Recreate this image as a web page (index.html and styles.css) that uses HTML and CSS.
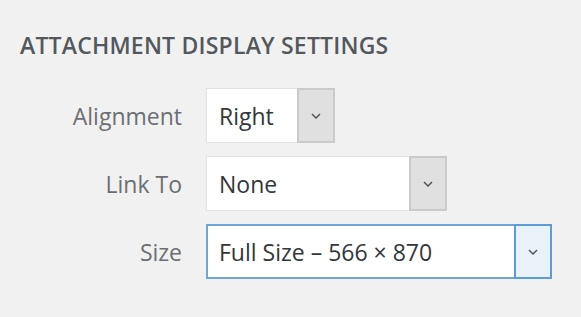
FILE: index.html
```html
<!DOCTYPE html>
<html lang="en">
  <head>
    <meta charset="UTF-8" />
    <meta name="viewport" content="width=device-width, initial-scale=1.0" />
    <title>Attachment Display Settings</title>
    <link rel="stylesheet" href="styles.css">
  </head>
  <body>
    <div class="settings">
      <h2>Attachment Display Settings</h2>

      <div class="rows">
        <label class="label">Alignment</label>
        <div class="select select-align">
          <span class="value">Right</span>
          <span class="arrow">
            <svg width="10" height="6" viewBox="0 0 10 6"><polyline points="1,1 5,5 9,1" /></svg>
          </span>
        </div>

        <label class="label">Link To</label>
        <div class="select select-link">
          <span class="value">None</span>
          <span class="arrow">
            <svg width="10" height="6" viewBox="0 0 10 6"><polyline points="1,1 5,5 9,1" /></svg>
          </span>
        </div>

        <label class="label">Size</label>
        <div class="select select-size focus">
          <span class="value">Full Size &ndash; 566 &times; 870</span>
          <span class="arrow">
            <svg width="10" height="6" viewBox="0 0 10 6"><polyline points="1,1 5,5 9,1" /></svg>
          </span>
        </div>
      </div>
    </div>
  </body>
</html>
```

FILE: styles.css
```css
html {
  background: #f1f1f1;
}
body {
  margin: 0;
  font-family: "Open Sans", "Noto Sans", sans-serif;
}
.settings {
  padding: 29px 20px 0 20px;
}
h2 {
  margin: 0 0 27px 0;
  font-size: 23px;
  line-height: 32px;
  font-weight: 600;
  letter-spacing: 0.2px;
  text-transform: uppercase;
  color: #53585d;
}
.rows {
  display: grid;
  grid-template-columns: 162px auto;
  column-gap: 24px;
  row-gap: 13px;
  justify-items: start;
  align-items: center;
}
.label {
  justify-self: end;
  font-size: 23px;
  color: #6b6f73;
}
.select {
  display: flex;
  height: 55px;
  box-sizing: border-box;
  background: white;
  border: 1px solid #e2e2e2;
}
.select-align {
  width: 129px;
}
.select-link {
  width: 241px;
}
.select-size {
  width: 346px;
}
.value {
  flex: 1;
  display: flex;
  align-items: center;
  padding-left: 12px;
  font-size: 23px;
  color: #32373c;
}
.arrow {
  width: 34px;
  margin: -1px -1px -1px 0;
  display: flex;
  align-items: center;
  justify-content: center;
  background: #e0e0e0;
  border: 2px solid #cacaca;
}
.arrow polyline {
  fill: none;
  stroke: #555;
  stroke-width: 1.5;
}
.focus {
  border: 2px solid #6ea6dc;
}
.focus .value {
  padding-left: 11px;
}
.focus .arrow {
  margin: -2px -2px -2px 0;
  background: #e9f1f9;
  border-color: #5b9dd9;
}
```
